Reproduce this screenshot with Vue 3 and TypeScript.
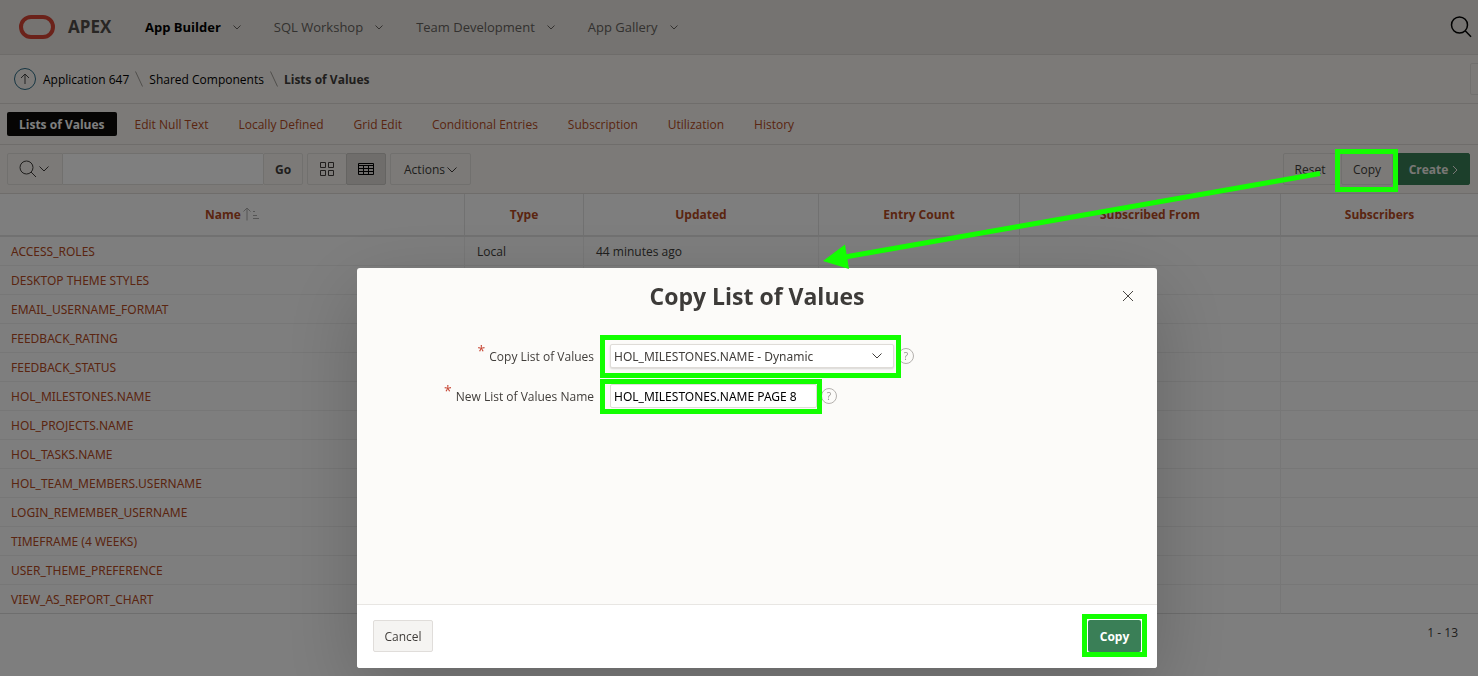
<script setup lang="ts">
import { ref } from 'vue'

interface Column {
  label: string
  cls: string
  sorted?: boolean
}

const navItems = ['App Builder', 'SQL Workshop', 'Team Development', 'App Gallery']
const tabs = [
  'Lists of Values',
  'Edit Null Text',
  'Locally Defined',
  'Grid Edit',
  'Conditional Entries',
  'Subscription',
  'Utilization',
  'History',
]
const columns: Column[] = [
  { label: 'Name', cls: 'col-name', sorted: true },
  { label: 'Type', cls: 'col-type' },
  { label: 'Updated', cls: 'col-updated' },
  { label: 'Entry Count', cls: 'col-count' },
  { label: 'Subscribed From', cls: 'col-from' },
  { label: 'Subscribers', cls: 'col-subs' },
]
const names = [
  'ACCESS_ROLES',
  'DESKTOP THEME STYLES',
  'EMAIL_USERNAME_FORMAT',
  'FEEDBACK_RATING',
  'FEEDBACK_STATUS',
  'HOL_MILESTONES.NAME',
  'HOL_PROJECTS.NAME',
  'HOL_TASKS.NAME',
  'HOL_TEAM_MEMBERS.USERNAME',
  'LOGIN_REMEMBER_USERNAME',
  'TIMEFRAME (4 WEEKS)',
  'USER_THEME_PREFERENCE',
  'VIEW_AS_REPORT_CHART',
]
const search = ref('')
const source = ref('HOL_MILESTONES.NAME - Dynamic')
const newName = ref('HOL_MILESTONES.NAME PAGE 8')
</script>

<template>
  <div class="page">
    <header class="topbar">
      <a href="#" class="brand">
        <svg class="logo" viewBox="0 0 36 24" aria-hidden="true"><rect x="2" y="2" width="32" height="20" rx="10" /></svg>
        <span>APEX</span>
      </a>
      <nav class="nav" aria-label="Main">
        <button v-for="(item, i) in navItems" :key="item" type="button" class="nav-item" :class="{ current: i === 0 }">
          <span>{{ item }}</span>
          <svg class="nav-chevron" viewBox="0 0 8 6" aria-hidden="true"><path d="M.5 1.500 4 5 7.500 1.500" /></svg>
        </button>
      </nav>
      <button type="button" class="top-search" aria-label="Search">
        <svg viewBox="0 0 22 22"><circle cx="9.500" cy="9" r="8" /><path d="m15.200 14.700 5.800 6" /></svg>
      </button>
    </header>

    <nav class="crumbs" aria-label="Breadcrumb">
      <button type="button" class="up" aria-label="Up">
        <svg viewBox="0 0 22 22"><circle cx="11" cy="11" r="10.500" class="ring" /><path d="M11 16V6.500M7 10l4-4 4 4" /></svg>
      </button>
      <a href="#">Application 647</a>
      <svg class="slash" viewBox="0 0 8 16" aria-hidden="true"><path d="M.5.5l7 15" /></svg>
      <a href="#">Shared Components</a>
      <svg class="slash" viewBox="0 0 8 16" aria-hidden="true"><path d="M.5.5l7 15" /></svg>
      <strong>Lists of Values</strong>
      <button type="button" class="btn edge" aria-label="More"></button>
    </nav>

    <nav class="tabs" aria-label="Lists of Values">
      <a v-for="(tab, i) in tabs" :key="tab" href="#" class="tab" :class="{ active: i === 0 }">{{ tab }}</a>
    </nav>

    <div class="toolbar">
      <div class="group search">
        <button type="button" class="btn finder" aria-label="Select columns to search">
          <svg class="lens" viewBox="0 0 18 18"><circle cx="7.500" cy="7.500" r="6.500" /><path d="m12 12 5 5" /></svg>
          <svg class="chevron" viewBox="0 0 10 6"><path d="m.5.500 4.500 4.500L9.500.500" /></svg>
        </button>
        <input v-model="search" type="text" aria-label="Search report" />
        <button type="button" class="btn go">Go</button>
      </div>
      <div class="group views">
        <button type="button" class="btn" aria-label="View icons">
          <svg viewBox="0 0 16 16"><path d="M1.500 1.500h5v5h-5zM9.500 1.500h5v5h-5zM1.500 9.500h5v5h-5zM9.500 9.500h5v5h-5z" /></svg>
        </button>
        <button type="button" class="btn pressed" aria-label="View report">
          <svg viewBox="0 0 16 16"><path d="M.5 2.500h15v11H.5zM.5 4.500h15M.5 7.500h15M.5 10.500h15M5.500 4.500v9M10.500 4.500v9" /></svg>
        </button>
      </div>
      <button type="button" class="btn actions">
        Actions
        <svg class="chevron" viewBox="0 0 10 6"><path d="m.5.500 4.500 4.500L9.500.500" /></svg>
      </button>
      <div class="spacer"></div>
      <button type="button" class="btn reset">Reset</button>
      <button type="button" class="btn copy">Copy</button>
      <button type="button" class="btn create">
        Create
        <svg viewBox="0 0 6 10"><path d="M1 1l4 4-4 4" /></svg>
      </button>
    </div>

    <table class="report">
      <thead>
        <tr>
          <th v-for="col in columns" :key="col.label" scope="col" :class="col.cls">
            <a href="#">{{ col.label }}</a>
            <svg v-if="col.sorted" class="sort" viewBox="0 0 16 14" aria-hidden="true">
              <path d="M4 13.500V1M.5 4.500 4 1l3.500 3.500M10 4.500h2M10 8.500h4M10 11.500h6" />
            </svg>
          </th>
        </tr>
      </thead>
      <tbody>
        <tr v-for="(name, i) in names" :key="name">
          <td><a href="#">{{ name }}</a></td>
          <td>{{ i === 0 ? 'Local' : '' }}</td>
          <td>{{ i === 0 ? '44 minutes ago' : '' }}</td>
          <td></td>
          <td></td>
          <td></td>
        </tr>
      </tbody>
    </table>
    <p class="pager">1 - 13</p>
  </div>

  <div class="backdrop">
    <section class="dialog" role="dialog" aria-labelledby="dialog-title">
      <header class="dialog-head">
        <h1 id="dialog-title">Copy List of Values</h1>
        <button type="button" class="close" aria-label="Close">
          <svg viewBox="0 0 12 12"><path d="m1 1 10 10M11 1 1 11" /></svg>
        </button>
      </header>
      <form class="form" @submit.prevent>
        <div class="field">
          <label for="source"><span class="star">*</span>Copy List of Values</label>
          <div class="control">
            <div class="box wide">
              <select id="source" v-model="source">
                <option>HOL_MILESTONES.NAME - Dynamic</option>
              </select>
              <svg class="select-chevron" viewBox="0 0 10 6" aria-hidden="true"><path d="m.5.500 4.500 4.500L9.500.500" /></svg>
              <span class="mark mark-select"></span>
            </div>
            <button type="button" class="help" aria-label="Help">?</button>
          </div>
        </div>
        <div class="field">
          <label for="new-name"><span class="star">*</span>New List of Values Name</label>
          <div class="control">
            <div class="box narrow">
              <input id="new-name" v-model="newName" type="text" />
              <span class="mark mark-input"></span>
            </div>
            <button type="button" class="help" aria-label="Help">?</button>
          </div>
        </div>
      </form>
      <footer class="dialog-foot">
        <button type="button" class="cancel">Cancel</button>
        <button type="button" class="submit">Copy<span class="mark mark-submit"></span></button>
      </footer>
    </section>
  </div>

  <div class="notes" aria-hidden="true">
    <span class="mark mark-copy"></span>
    <svg class="arrow" viewBox="0 0 500 100">
      <path d="M499 4.500 24 88" class="shaft" />
      <path d="M2 92 24 75.500 28 100z" class="head" />
    </svg>
  </div>
</template>

<style>
body {
  margin: 0;
  background: #fff;
}
</style>

<style scoped>
.page,
.backdrop {
  font-family: 'Open Sans', 'Noto Sans', sans-serif;
  font-size: 12px;
  line-height: 16px;
  color: #403d3a;
}
.page *,
.backdrop * {
  box-sizing: border-box;
}
.page {
  min-height: 100vh;
  overflow: hidden;
  background: #fdfdfd;
}
button,
input,
select {
  font: inherit;
  color: inherit;
  margin: 0;
}
button {
  padding: 0;
  border: 0;
  background: none;
}
a {
  color: #b54a22;
  text-decoration: none;
}
svg {
  display: block;
  flex: none;
  fill: none;
  stroke: currentColor;
}

.topbar {
  display: flex;
  align-items: center;
  height: 55px;
  padding: 0 6px 0 19px;
  background: #eae7e2;
  border-bottom: 1px solid #dcd9d5;
}
.brand {
  display: flex;
  align-items: center;
  gap: 13px;
  width: 126px;
  color: #514c48;
  font-size: 17px;
  font-weight: 700;
}
.logo {
  width: 36px;
  height: 24px;
  stroke: #d64535;
  stroke-width: 4;
}
.nav {
  display: flex;
  gap: 33px;
  flex: 1;
}
.nav-item {
  display: flex;
  align-items: center;
  gap: 12px;
  font-size: 13px;
  color: #66625e;
}
.nav-item.current {
  color: #000;
  font-weight: 700;
}
.nav-chevron {
  width: 8px;
  height: 6px;
  stroke: #66625e;
}
.top-search svg {
  width: 22px;
  height: 22px;
  stroke: #000;
  stroke-width: 1.500;
}

.crumbs {
  display: flex;
  align-items: center;
  gap: 6px;
  height: 49px;
  padding-left: 14px;
  overflow: hidden;
  background: #f8f5f1;
  border-bottom: 1px solid #dedbd7;
}
.crumbs a,
.crumbs strong {
  padding-top: 2px;
}
.crumbs a {
  color: #000;
}
.up {
  margin-right: 1px;
}
.up svg {
  width: 22px;
  height: 22px;
  stroke: #444;
}
.up .ring {
  stroke: #2c6b85;
}
.slash {
  width: 8px;
  height: 16px;
  stroke: #a09c98;
}
.btn.edge {
  width: 32px;
  margin-left: auto;
  margin-right: -24px;
  flex: none;
}

.tabs {
  display: flex;
  align-items: center;
  gap: 6px;
  height: 41px;
  padding: 0 7px;
  background: #f8f5f1;
  border-bottom: 1px solid #dedbd7;
}
.tab {
  padding: 5px 12px 3px;
  border-radius: 2px;
}
.tab.active {
  background: #0c0a08;
  color: #fff;
  font-weight: 700;
}

.toolbar {
  display: flex;
  align-items: center;
  gap: 4px;
  height: 49px;
  padding: 0 8px 0 7px;
  background: #f8f5f1;
  border-bottom: 1px solid #dedbd7;
}
.btn {
  display: flex;
  align-items: center;
  justify-content: center;
  gap: 4px;
  height: 32px;
  border: 1px solid #e3e0dc;
  border-radius: 2px;
  color: #403d3a;
}
.group {
  display: flex;
}
.finder {
  width: 56px;
  gap: 2px;
  padding-right: 2px;
  border-radius: 2px 0 0 2px;
}
.lens {
  width: 18px;
  height: 18px;
}
.chevron {
  width: 10px;
  height: 6px;
}
.search input {
  width: 200px;
  height: 32px;
  padding: 0 8px;
  border: 1px solid #e3e0dc;
  border-width: 1px 0;
  background: #fff;
}
.go {
  width: 40px;
  font-weight: 700;
}
.views .btn {
  width: 40px;
}
.views .btn + .btn {
  width: 40px;
  margin-left: -1px;
}
.views svg {
  width: 16px;
  height: 16px;
}
.views .pressed {
  background: #dedbd7;
  border-color: #cbc8c4;
  color: #000;
}
.go,
.actions,
.reset,
.copy,
.create {
  padding-top: 2px;
}
.actions {
  width: 81px;
  gap: 2px;
}
.spacer {
  flex: 1;
}
.reset {
  width: 54px;
}
.copy {
  width: 52px;
}
.create {
  width: 73px;
  gap: 4px;
  background: #387f57;
  border-color: #387f57;
  color: #f2efeb;
  font-weight: 700;
}
.create svg {
  width: 6px;
  height: 10px;
}

.report {
  width: 100%;
  table-layout: fixed;
  border-collapse: separate;
  border-spacing: 0;
}
.report th {
  height: 43px;
  padding: 0;
  border-bottom: 2px solid #e3e3e3;
  border-left: 1px solid #e3e3e3;
}
.report td {
  height: 29px;
  padding: 2px 12px 0;
  border-bottom: 1px solid #eee;
  border-left: 1px solid #eee;
  white-space: nowrap;
}
.report th:first-child,
.report td:first-child {
  border-left: 0;
}
.report td:first-child {
  padding-left: 11px;
  font-family: 'Noto Sans', 'Open Sans', sans-serif;
}
.report tbody tr:last-child td {
  border-bottom-color: #dcdcdc;
}
.col-type {
  width: 119px;
}
.col-updated {
  width: 235px;
}
.col-count {
  width: 201px;
}
.col-from {
  width: 261px;
}
.col-subs {
  width: 198px;
}
.sort {
  display: inline-block;
  width: 16px;
  height: 14px;
  margin-left: 2px;
  vertical-align: -2px;
  stroke: #aaa;
}
.pager {
  margin: 11px 20px 0;
  text-align: right;
}

.backdrop {
  position: fixed;
  inset: 0;
  display: flex;
  align-items: flex-end;
  justify-content: center;
  padding: 0 0 8px 36px;
  box-sizing: border-box;
  background: rgba(0, 0, 0, 0.5);
}
.dialog {
  display: flex;
  flex-direction: column;
  width: 800px;
  min-height: 400px;
  border-radius: 3px;
  background: #fcfbf9;
  box-shadow: 0 24px 80px rgba(0, 0, 0, 0.2);
}
.dialog-head {
  display: grid;
  grid-template-columns: 1fr auto 1fr;
  align-items: center;
  height: 56px;
  padding: 0 23px;
}
.dialog-head h1 {
  grid-column: 2;
  margin: 0;
  font-size: 23px;
  line-height: 32px;
  font-weight: 700;
  color: #3d3b39;
}
.close {
  justify-self: end;
  color: #4a4744;
}
.close svg {
  width: 12px;
  height: 12px;
}
.form {
  flex: 1;
  padding-top: 12px;
}
.field {
  display: grid;
  grid-template-columns: 237px 1fr;
  column-gap: 16px;
  align-items: center;
  height: 40px;
}
.field label {
  display: flex;
  justify-content: flex-end;
  gap: 4px;
  padding-top: 2px;
}
.star {
  margin-top: -6px;
  font-size: 14px;
  color: #c74634;
}
.control {
  display: flex;
  align-items: center;
  gap: 4px;
}
.box {
  position: relative;
  height: 24px;
}
.wide {
  width: 284px;
}
.narrow {
  width: 207px;
}
.box select,
.box input {
  display: block;
  width: 100%;
  height: 24px;
  padding: 0 3px;
  border: 1px solid #dfdcd8;
  border-radius: 2px;
  background: #fff;
  font-family: 'Noto Sans', 'Open Sans', sans-serif;
  appearance: none;
}
.box select {
  padding-top: 1px;
  box-shadow: 0 1px 2px rgba(0, 0, 0, 0.15);
}
.box input {
  color: #000;
}
.select-chevron {
  position: absolute;
  top: 9px;
  right: 12px;
  width: 10px;
  height: 6px;
}
.help {
  width: 16px;
  height: 16px;
  border: 1px solid #b4b1ae;
  border-radius: 50%;
  font-size: 10px;
  line-height: 14px;
  color: #96938f;
}
.dialog-foot {
  display: flex;
  align-items: center;
  justify-content: space-between;
  height: 64px;
  padding: 0 16px 1px;
  border-top: 1px solid #e8e6e3;
  border-radius: 0 0 3px 3px;
  background: #fff;
}
.cancel,
.submit {
  height: 32px;
  padding-top: 1px;
  border-radius: 2px;
}
.cancel {
  width: 60px;
  border: 1px solid #e0ddda;
  background: #f5f4f2;
}
.submit {
  position: relative;
  width: 53px;
  background: #3a7f57;
  color: #fff;
  font-weight: 700;
}

.mark {
  position: absolute;
  box-sizing: border-box;
  border: 5px solid #12ff00;
  pointer-events: none;
}
.mark-select {
  inset: -9px -7px -10px -10px;
}
.mark-input {
  inset: -5px -5px -6px -10px;
}
.mark-submit {
  inset: -6px -6px -5px -6px;
}
.notes {
  position: absolute;
  top: 0;
  right: 0;
  pointer-events: none;
}
.mark-copy {
  top: 149px;
  right: 80px;
  width: 63px;
  height: 43px;
}
.arrow {
  position: absolute;
  top: 169px;
  right: 157px;
  width: 500px;
  height: 100px;
}
.shaft {
  stroke: #12ff00;
  stroke-width: 5;
}
.head {
  fill: #12ff00;
  stroke: none;
}
</style>
